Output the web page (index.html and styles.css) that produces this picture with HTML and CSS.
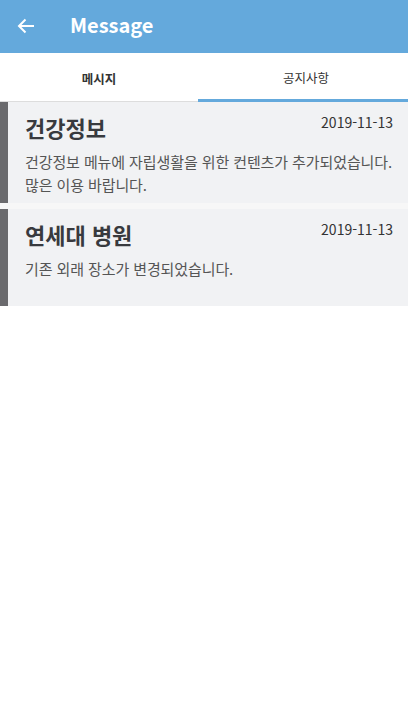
FILE: index.html
```html
<!DOCTYPE html>
<html lang="ko">
<head>
<meta charset="utf-8">
<link rel="stylesheet" href="styles.css">
</head>
<body>
<header class="appbar">
  <svg class="back" width="18" height="16" viewBox="0 0 18 16"><path d="M17 8H2M8.5 1.5L2 8l6.5 6.5" fill="none" stroke="#fff" stroke-width="2"/></svg>
  <h1 class="title">Message</h1>
</header>
<nav class="tabs">
  <div class="tab">메시지</div>
  <div class="tab active">공지사항</div>
</nav>
<main class="list">
  <article class="card">
    <div class="card-head">
      <h2 class="card-title">건강정보</h2>
      <span class="date">2019-11-13</span>
    </div>
    <p class="body">건강정보 메뉴에 자립생활을 위한 컨텐츠가 추가되었습니다. 많은 이용 바랍니다.</p>
  </article>
  <article class="card">
    <div class="card-head">
      <h2 class="card-title">연세대 병원</h2>
      <span class="date">2019-11-13</span>
    </div>
    <p class="body">기존 외래 장소가 변경되었습니다.</p>
  </article>
</main>
</body>
</html>
```
FILE: styles.css
```css
* { box-sizing: border-box; }
body {
  margin: 0;
  font-family: "Noto Sans CJK KR", "Noto Sans", sans-serif;
  background: #fff;
  width: 408px;
}
.appbar {
  height: 53px;
  background: #64a9dc;
  display: flex;
  align-items: center;
  padding-left: 17px;
}
.back { display: block; margin-top: -2px; }
.title {
  margin: 0 0 0 35px;
  color: #fff;
  font-size: 20px;
  font-weight: 700;
  line-height: 1;
  margin-top: -3px;
}
.tabs {
  display: flex;
  height: 49px;
  align-items: stretch;
}
.tab {
  width: 198px;
  display: flex;
  align-items: center;
  justify-content: center;
  font-size: 12.5px;
  color: #333;
  font-weight: 700;
  border-bottom: 1px solid #dddddd;
  padding-top: 3px;
  padding-bottom: 1px;
}
.tab.active {
  flex: 1;
  font-weight: 400;
  border-bottom: 3px solid #64a9dc;
  padding-bottom: 0;
  padding-left: 6px;
}
.list {
  display: flex;
  flex-direction: column;
  gap: 6px;
  background: #f7f7f7;
}
.card {
  background: #f1f2f4;
  border-left: 8px solid #6a6a6d;
  padding: 9px 15px 0 17px;
  height: 101px;
}
.card + .card { height: 97px; }
.card-head {
  display: flex;
  justify-content: space-between;
  align-items: flex-start;
}
.card-title {
  margin: 0;
  font-size: 22px;
  font-weight: 700;
  color: #383a3e;
  line-height: 32px;
}
.date {
  font-size: 14px;
  color: #333;
  line-height: 20px;
  margin-top: 1px;
}
.body {
  margin: 7px 0 0;
  font-size: 15px;
  line-height: 23px;
  color: #555;
  letter-spacing: -0.1px;
}
```
